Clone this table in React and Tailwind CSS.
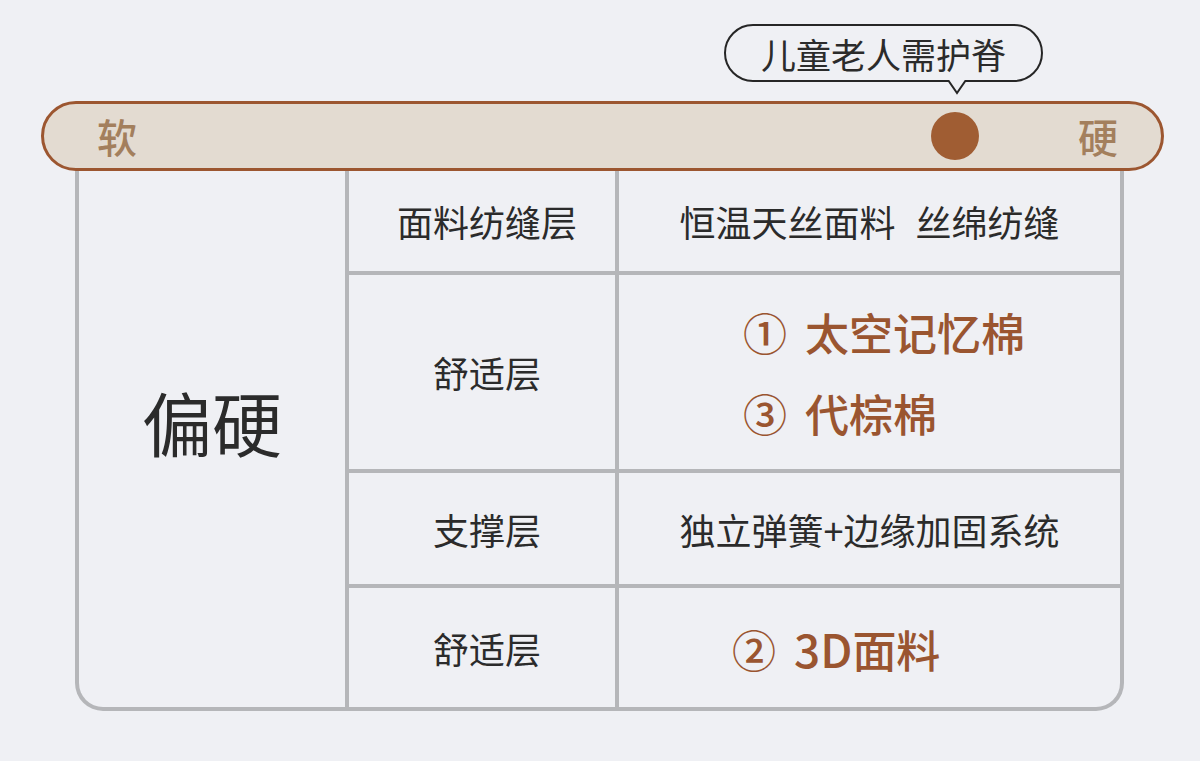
import React from 'react';

const cjk = { fontFamily: '"Noto Sans CJK SC", "Noto Sans", sans-serif' };

const Row = ({ label, children, last, h, extra = '' }) => (
  <div className={`flex ${last ? '' : 'border-b-4 border-[#b5b6b9]'} ${h} ${extra}`}>
    <div className="w-[270px] shrink-0 border-r-4 border-[#b5b6b9] flex items-center justify-center pl-[10px] text-[36px] text-[#2b2b2b]">
      {label}
    </div>
    <div className="flex-1 flex items-center">{children}</div>
  </div>
);

const App = () => {
  return (
    <div className="w-[1200px] h-[761px] bg-[#eff0f4] overflow-hidden" style={cjk}>
      {/* bubble */}
      <div className="pt-[24px] pl-[724px] h-[101px]">
        <div className="relative w-[319px] h-[58px] rounded-full border-2 border-[#262626] bg-[#eff0f4] flex items-center justify-center text-[35px] text-[#2b2b2b] leading-none">
          儿童老人需护脊
          <svg className="absolute left-[221px] top-[54px]" width="20" height="16" viewBox="0 0 20 16">
            <path d="M1 0 L10 13 L19 0" fill="#eff0f4" stroke="#262626" strokeWidth="2" strokeLinejoin="miter" />
          </svg>
        </div>
      </div>

      {/* soft / hard bar */}
      <div className="relative z-10 ml-[41px] w-[1123px] h-[70px] rounded-full border-[3px] border-[#9c5630] bg-[#e3dbd1] flex items-center justify-between pl-[53px] pr-[43px] text-[40px] font-medium text-[#a37f5d] leading-none">
        <span>软</span>
        <div className="flex items-center gap-[99px]">
          <div className="w-[48px] h-[48px] rounded-full bg-[#a05d33]" />
          <span>硬</span>
        </div>
      </div>

      {/* table */}
      <div className="-mt-[35px] ml-[75px] w-[1049px] h-[575px] border-x-4 border-b-4 border-[#b5b6b9] rounded-b-[28px] flex">
        <div className="w-[270px] shrink-0 border-r-4 border-[#b5b6b9] flex items-center justify-center text-[70px] text-[#2b2b2b] leading-none">
          偏硬
        </div>
        <div className="flex-1 flex flex-col">
          <Row label="面料纺缝层" h="h-[139px]" extra="pt-[35px]">
            <div className="w-full text-center text-[36px] text-[#2b2b2b]">
              恒温天丝面料<span className="ml-[20px]">丝绵纺缝</span>
            </div>
          </Row>
          <Row label="舒适层" h="h-[198px]">
            <div className="pl-[124px] flex flex-col gap-[37px] text-[44px] font-medium text-[#9a5530] leading-none">
              <div><span className="mr-[18px]">①</span>太空记忆棉</div>
              <div><span className="mr-[18px]">③</span>代棕棉</div>
            </div>
          </Row>
          <Row label="支撑层" h="h-[115px]">
            <div className="w-full text-center text-[36px] text-[#2b2b2b]">独立弹簧+边缘加固系统</div>
          </Row>
          <Row label="舒适层" last h="flex-1">
            <div className="pl-[113px] text-[44px] font-medium text-[#9a5530] leading-none">
              <span className="mr-[18px]">②</span><span className="text-[46px]">3D</span>面料
            </div>
          </Row>
        </div>
      </div>
    </div>
  );
};

export default App;
